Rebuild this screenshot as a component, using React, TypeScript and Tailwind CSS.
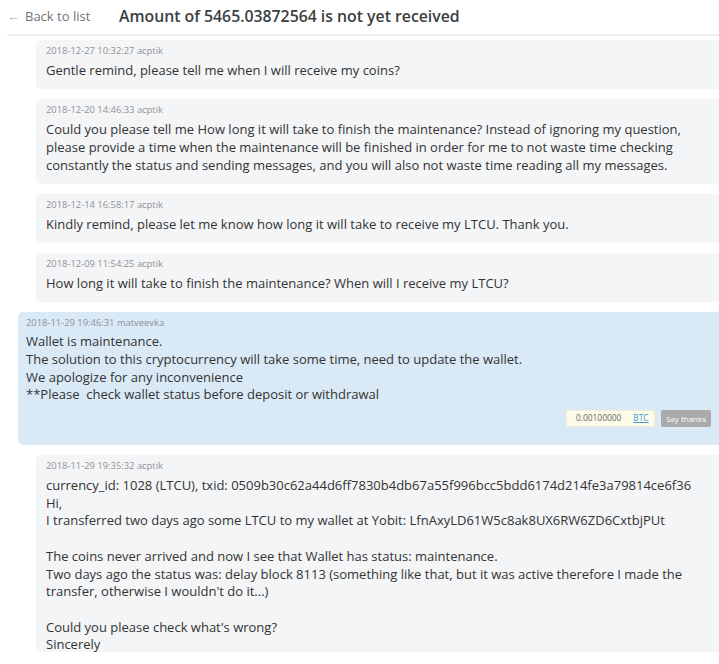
import React from 'react';

type Msg = {
  date: string;
  author: string;
  text: string;
  staff?: boolean;
};

const messages: Msg[] = [
  {
    date: '2018-12-27 10:32:27',
    author: 'acptik',
    text: 'Gentle remind, please tell me when I will receive my coins?',
  },
  {
    date: '2018-12-20 14:46:33',
    author: 'acptik',
    text: 'Could you please tell me How long it will take to finish the maintenance? Instead of ignoring my question, please provide a time when the maintenance will be finished in order for me to not waste time checking constantly the status and sending messages, and you will also not waste time reading all my messages.',
  },
  {
    date: '2018-12-14 16:58:17',
    author: 'acptik',
    text: 'Kindly remind, please let me know how long it will take to receive my LTCU. Thank you.',
  },
  {
    date: '2018-12-09 11:54:25',
    author: 'acptik',
    text: 'How long it will take to finish the maintenance? When will I receive my LTCU?',
  },
  {
    date: '2018-11-29 19:46:31',
    author: 'matveevka',
    staff: true,
    text: 'Wallet is maintenance.\nThe solution to this cryptocurrency will take some time, need to update the wallet.\nWe apologize for any inconvenience\n**Please  check wallet status before deposit or withdrawal',
  },
  {
    date: '2018-11-29 19:35:32',
    author: 'acptik',
    text: "currency_id: 1028 (LTCU), txid: 0509b30c62a44d6ff7830b4db67a55f996bcc5bdd6174d214fe3a79814ce6f36\nHi,\nI transferred two days ago some LTCU to my wallet at Yobit: LfnAxyLD61W5c8ak8UX6RW6ZD6CxtbjPUt\n\nThe coins never arrived and now I see that Wallet has status: maintenance.\nTwo days ago the status was: delay block 8113 (something like that, but it was active therefore I made the transfer, otherwise I wouldn't do it...)\n\nCould you please check what's wrong?\nSincerely",
  },
];

const Message = ({ msg }: { msg: Msg }) => {
  if (msg.staff) {
    return (
      <div className="ml-[18px] mr-[-6px] rounded-[5px] bg-[#dae9f6] pl-[8px] pr-[14px] pt-[5px] pb-[18px]">
        <div className="text-[9.4px] leading-[12px] text-[#8c939a]">
          {msg.date} {msg.author}
        </div>
        <div className="mt-[4px] whitespace-pre-wrap text-[13px] leading-[17.7px] text-[#333]">{msg.text}</div>
        <div className="mt-[6px] flex justify-end gap-[6px]">
          <div className="flex h-[17px] w-[89px] items-center gap-[12px] rounded-[2px] border border-[#f3eed2] bg-[#fdfbea] pl-[9px] text-[8.4px]">
            <span className="text-[#666]">0.00100000</span>
            <a href="#" className="text-[#3d9ad6] underline">BTC</a>
          </div>
          <button className="h-[17px] w-[50px] rounded-[2px] bg-[#aaaaaa] text-[8px] text-white">Say thanks</button>
        </div>
      </div>
    );
  }
  return (
    <div className="ml-[36px] mr-[-6px] rounded-[5px] bg-[#f4f5f7] pl-[10px] pr-[16px] pt-[5px] pb-[9.5px]">
      <div className="text-[9.4px] leading-[12px] text-[#8f9296]">
        {msg.date} {msg.author}
      </div>
      <div className="mt-[5px] whitespace-pre-wrap text-[13px] leading-[17.7px] text-[#333]">{msg.text}</div>
    </div>
  );
};

export default function App() {
  return (
    <div className="h-[664px] w-[719px] overflow-hidden bg-white font-['Open_Sans',sans-serif]">
      {/* Header */}
      <div className="ml-[7px] flex h-[36px] items-center border-b-2 border-[#eeeff1]">
        <a href="#" className="flex w-[112px] items-center text-[13px] text-[#6f747a]">
          <span className="mr-[5px] text-[13px] text-[#a3b0bd]">←</span>
          Back to list
        </a>
        <h1 className="text-[15.8px] font-semibold text-[#3b3e42]">Amount of 5465.03872564 is not yet received</h1>
      </div>

      {/* Messages, cut where the screenshot ends */}
      <div className="mt-[4px] flex h-[612px] flex-col gap-[10px] overflow-hidden">
        {messages.map((m, i) => (
          <Message key={i} msg={m} />
        ))}
      </div>
    </div>
  );
}
